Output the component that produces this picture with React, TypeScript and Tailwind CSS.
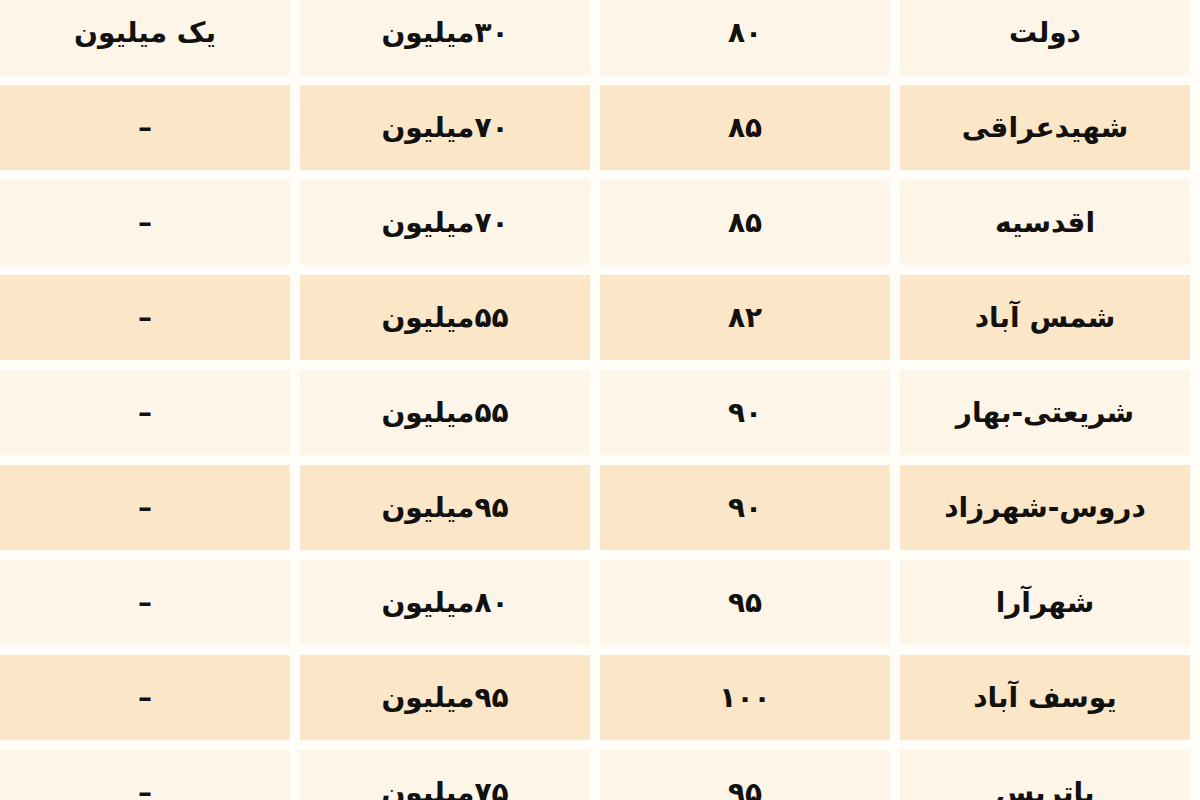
import React from "react";

const rows = [
  { name: "دولت", area: "۸۰", price: "۳۰میلیون", extra: "یک میلیون" },
  { name: "شهیدعراقی", area: "۸۵", price: "۷۰میلیون", extra: "–" },
  { name: "اقدسیه", area: "۸۵", price: "۷۰میلیون", extra: "–" },
  { name: "شمس آباد", area: "۸۲", price: "۵۵میلیون", extra: "–" },
  { name: "شریعتی-بهار", area: "۹۰", price: "۵۵میلیون", extra: "–" },
  { name: "دروس-شهرزاد", area: "۹۰", price: "۹۵میلیون", extra: "–" },
  { name: "شهرآرا", area: "۹۵", price: "۸۰میلیون", extra: "–" },
  { name: "یوسف آباد", area: "۱۰۰", price: "۹۵میلیون", extra: "–" },
  { name: "پاتریس", area: "۹۵", price: "۷۵میلیون", extra: "–" },
];

const App = () => {
  return (
    <div className="w-[1200px] h-[800px] overflow-hidden bg-[#fffdf8]">
      {/* price table, first row is cut off at the top */}
      <div
        dir="rtl"
        className="-mt-[10px] pr-[10px] flex flex-col gap-[10px] text-[#111] font-bold text-[28px]"
        style={{ fontFamily: '"DejaVu Sans", sans-serif' }}
      >
        {rows.map((r, i) => {
          const bg = i % 2 === 0 ? "bg-[#fdf5e8]" : "bg-[#fce6c8]";
          return (
            <div key={i} className="grid grid-cols-4 gap-[10px] h-[85px]">
              <div className={`${bg} flex items-center justify-center`}>{r.name}</div>
              <div className={`${bg} flex items-center justify-center`}>{r.area}</div>
              <div className={`${bg} flex items-center justify-center`}>{r.price}</div>
              <div className={`${bg} flex items-center justify-center`}>{r.extra}</div>
            </div>
          );
        })}
      </div>
    </div>
  );
};

export default App;
